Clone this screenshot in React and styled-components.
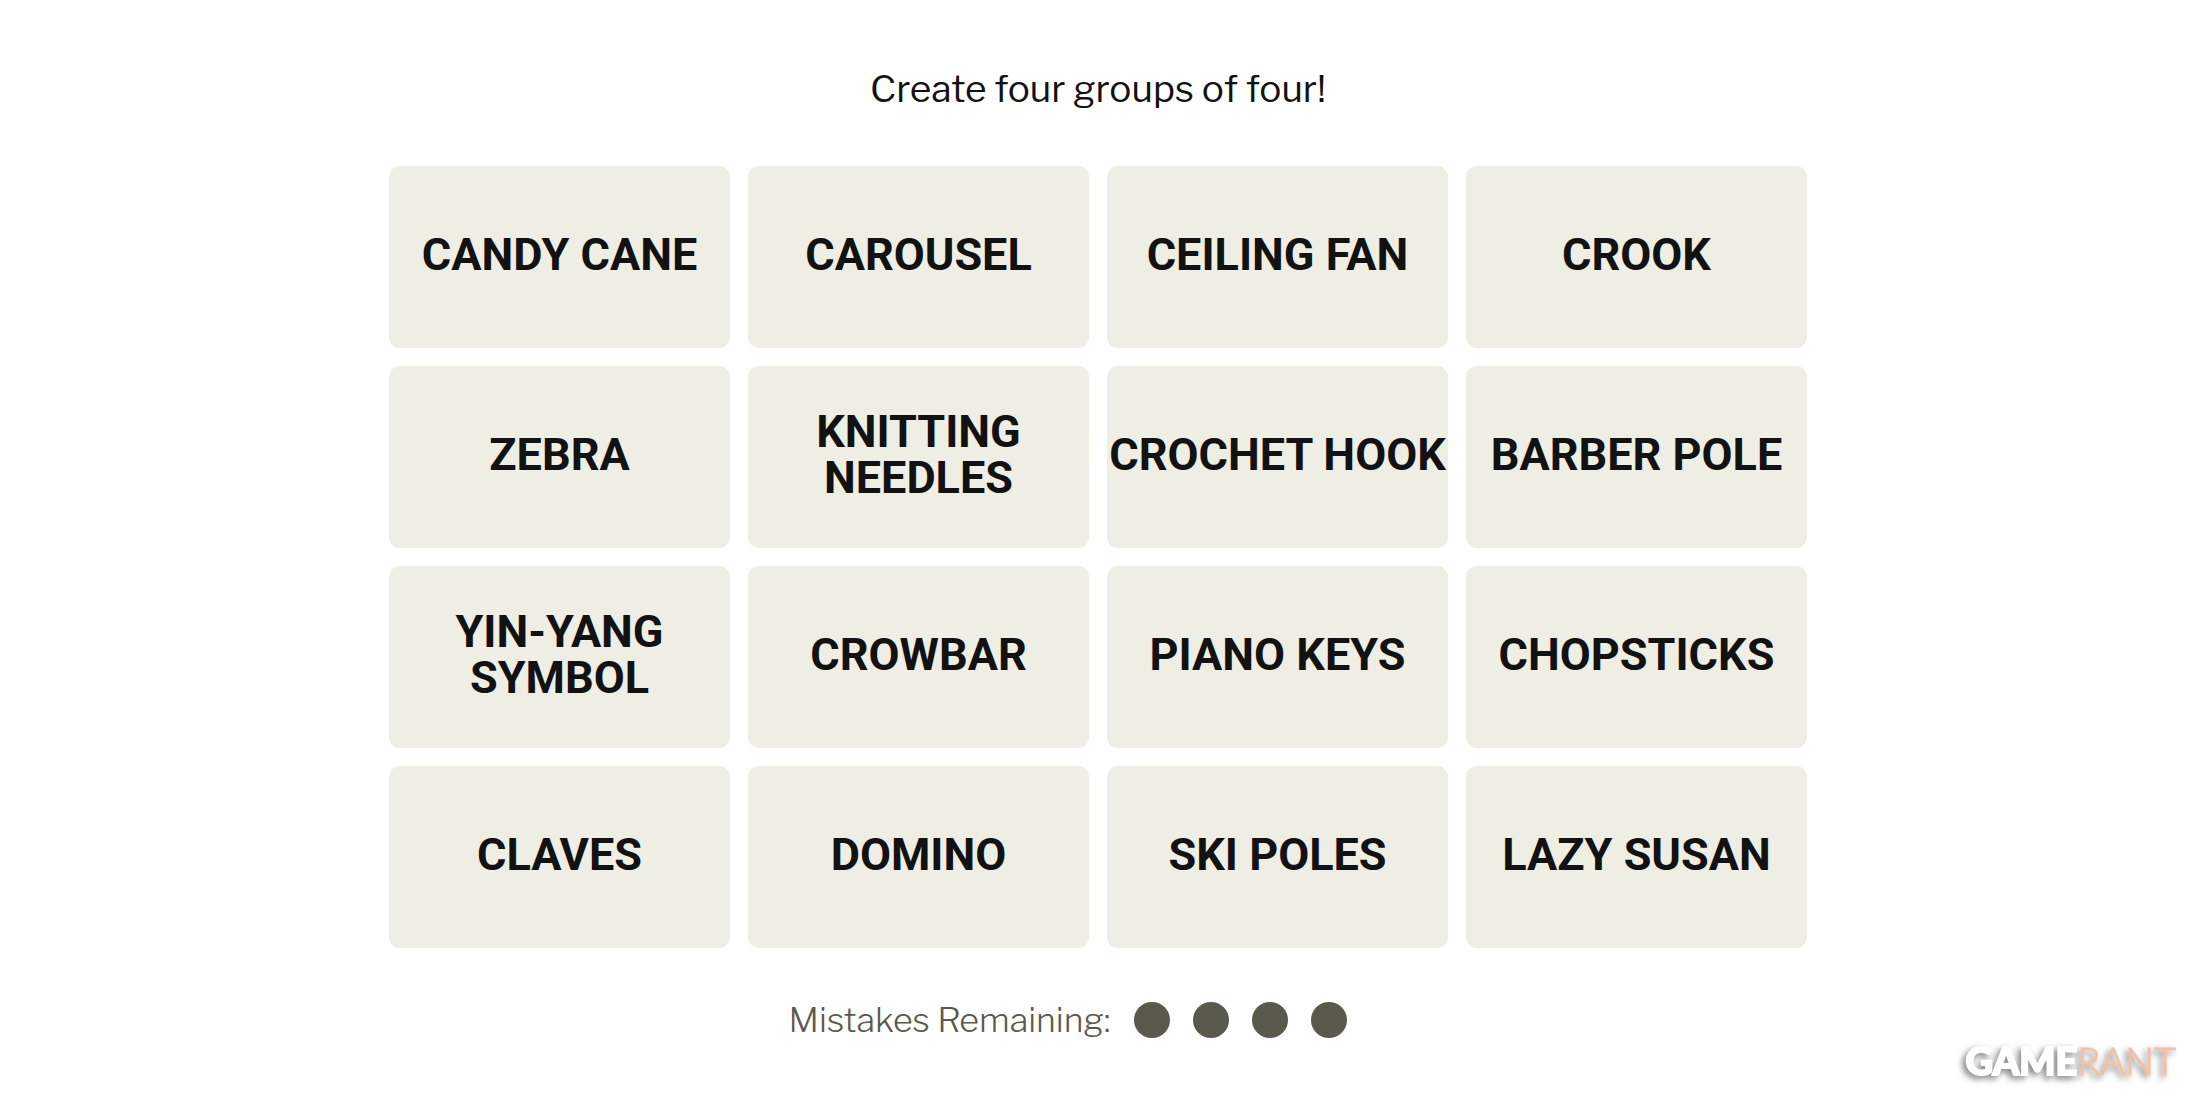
import React from 'react';
import styled, { createGlobalStyle } from 'styled-components';

const GlobalStyle = createGlobalStyle`
  body {
    background-color: #fff;
    color: #121212;
    font-family: 'Libre Franklin', 'Liberation Sans', Arial, sans-serif;
    margin: 0;
  }
`;

const Page = styled.main`
  box-sizing: border-box;
  display: flex;
  flex-direction: column;
  align-items: center;
  min-height: 100vh;
  padding: 65px 28px 20px 24px;
  position: relative;
`;

const Instructions = styled.h1`
  font-size: 37px;
  font-weight: 400;
  line-height: 48px;
  margin: 0 0 53px;
`;

const Board = styled.div`
  display: grid;
  gap: 18px;
  grid-auto-rows: 182px;
  grid-template-columns: repeat(4, minmax(0, 1fr));
  max-width: 1418px;
  width: 100%;
`;

const Tile = styled.button`
  background-color: #eeeee4;
  border: 0;
  border-radius: 11px;
  color: #121212;
  cursor: pointer;
  font-family: Roboto, sans-serif;
  font-size: 45px;
  font-weight: 700;
  line-height: 46px;
  padding: 0 0 4px;
  text-align: center;
  text-transform: uppercase;
`;

const Mistakes = styled.div`
  display: flex;
  align-items: center;
  gap: 24px;
  margin-top: 48px;
  padding-right: 60px;
`;

const MistakesLabel = styled.span`
  color: #5a594e;
  font-size: 34px;
  font-weight: 300;
  line-height: 48px;
`;

const Dots = styled.div`
  display: flex;
  gap: 23px;
`;

const Dot = styled.span`
  background-color: #5a594e;
  border-radius: 50%;
  height: 36px;
  width: 36px;
`;

const Watermark = styled.div`
  bottom: 16px;
  color: #fff;
  filter: drop-shadow(-3px 3px 3px rgba(0, 0, 0, 0.5));
  font-family: Lato, sans-serif;
  font-size: 38px;
  font-weight: 900;
  line-height: 48px;
  position: absolute;
  right: 24px;
`;

const WatermarkName = styled.span`
  -webkit-text-stroke: 2px #fff;
`;

const WatermarkAccent = styled.span`
  color: #f5bfa5;
  font-weight: 300;
  -webkit-text-stroke: 1px #f5bfa5;
`;

const words = [
  'Candy Cane',
  'Carousel',
  'Ceiling Fan',
  'Crook',
  'Zebra',
  'Knitting Needles',
  'Crochet Hook',
  'Barber Pole',
  'Yin-Yang Symbol',
  'Crowbar',
  'Piano Keys',
  'Chopsticks',
  'Claves',
  'Domino',
  'Ski Poles',
  'Lazy Susan',
];

const mistakesRemaining = 4;

function App() {
  return (
    <Page>
      <GlobalStyle />
      <Instructions>Create four groups of four!</Instructions>
      <Board>
        {words.map(word => (
          <Tile key={word} type="button">
            {word}
          </Tile>
        ))}
      </Board>
      <Mistakes>
        <MistakesLabel>Mistakes Remaining:</MistakesLabel>
        <Dots>
          {Array.from({ length: mistakesRemaining }, (_, i) => (
            <Dot key={i} />
          ))}
        </Dots>
      </Mistakes>
      <Watermark>
        <WatermarkName>GAME</WatermarkName>
        <WatermarkAccent>RANT</WatermarkAccent>
      </Watermark>
    </Page>
  );
}

export default App;
